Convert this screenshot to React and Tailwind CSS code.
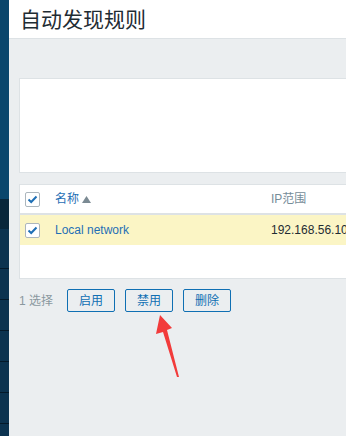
const font = { fontFamily: '"Liberation Sans", Arial, "Noto Sans CJK SC", sans-serif' };

const Check = () => (
  <span className="flex h-[15px] w-[15px] items-center justify-center rounded-[2px] border border-[#acb6bd] bg-white">
    <svg width="11" height="9" viewBox="0 0 11 9">
      <path d="M1.5 4.5 L4.2 7 L9.5 1.5" fill="none" stroke="#1f6fb5" strokeWidth="2" />
    </svg>
  </span>
);

const ActionButton = ({ label }) => (
  <button className="h-[23px] w-[48px] rounded-[2px] border border-[#0f6fb3] bg-transparent text-[12px] leading-none text-[#0f6fb3]">
    {label}
  </button>
);

export default function App() {
  return (
    <div className="relative flex h-[436px] w-[346px] overflow-hidden bg-[#ebeef0]" style={font}>
      <div className="flex w-[9px] shrink-0 flex-col">
        <div className="h-[199px] bg-[#0a466c]" />
        <div className="h-[30px] bg-[#09263a]" />
        <div className="flex flex-1 flex-col bg-[#0c3350]">
          <div className="h-[40px] border-b border-[#04192a]" />
          <div className="h-[31px] border-b border-[#04192a]" />
          <div className="h-[31px] border-b border-[#04192a]" />
          <div className="h-[31px] border-b border-[#04192a]" />
          <div className="h-[31px] border-b border-[#04192a]" />
          <div className="h-[31px] border-b border-[#04192a]" />
        </div>
      </div>

      <div className="flex w-[600px] shrink-0 flex-col">
        <div className="flex h-[39px] items-center border-b border-[#dde2e5] bg-white pl-[11px]">
          <h1 className="text-[21px] font-normal leading-none text-[#1f2c33]">自动发现规则</h1>
        </div>

        <div className="ml-[10px] mt-[39px] h-[95px] border border-[#dde2e5] bg-white" />

        <div className="ml-[10px] mt-[11px] border border-[#dde2e5] bg-white text-[12px]">
          <div className="flex h-[30px] items-center border-b-2 border-[#dde2e5]">
            <div className="w-[35px] pl-[5px]">
              <Check />
            </div>
            <div className="flex w-[216px] items-center gap-[3px] text-[#1f6fb5]">
              名称
              <svg width="9" height="7" viewBox="0 0 9 7">
                <path d="M0 7 L4.5 0 L9 7 Z" fill="#7b8a93" />
              </svg>
            </div>
            <div className="text-[#768d99]">IP范围</div>
          </div>
          <div className="flex h-[30px] items-center bg-[#fbf5c5]">
            <div className="w-[35px] pl-[5px]">
              <Check />
            </div>
            <div className="w-[216px] text-[#1f6fb5]">Local network</div>
            <div className="text-[#1f2c33]">192.168.56.100-254</div>
          </div>
          <div className="h-[33px]" />
        </div>

        <div className="ml-[10px] mt-[10px] flex items-center text-[12px]">
          <span className="w-[48px] text-[#8a989f]">1 选择</span>
          <div className="flex gap-[10px]">
            <ActionButton label="启用" />
            <ActionButton label="禁用" />
            <ActionButton label="删除" />
          </div>
        </div>
      </div>

      <svg className="absolute left-0 top-0" width="346" height="436" viewBox="0 0 346 436">
        <polygon points="160,315 172,328 167,330 179,377 177,377 163,332 156,334" fill="#f23b3b" />
      </svg>
    </div>
  );
}
